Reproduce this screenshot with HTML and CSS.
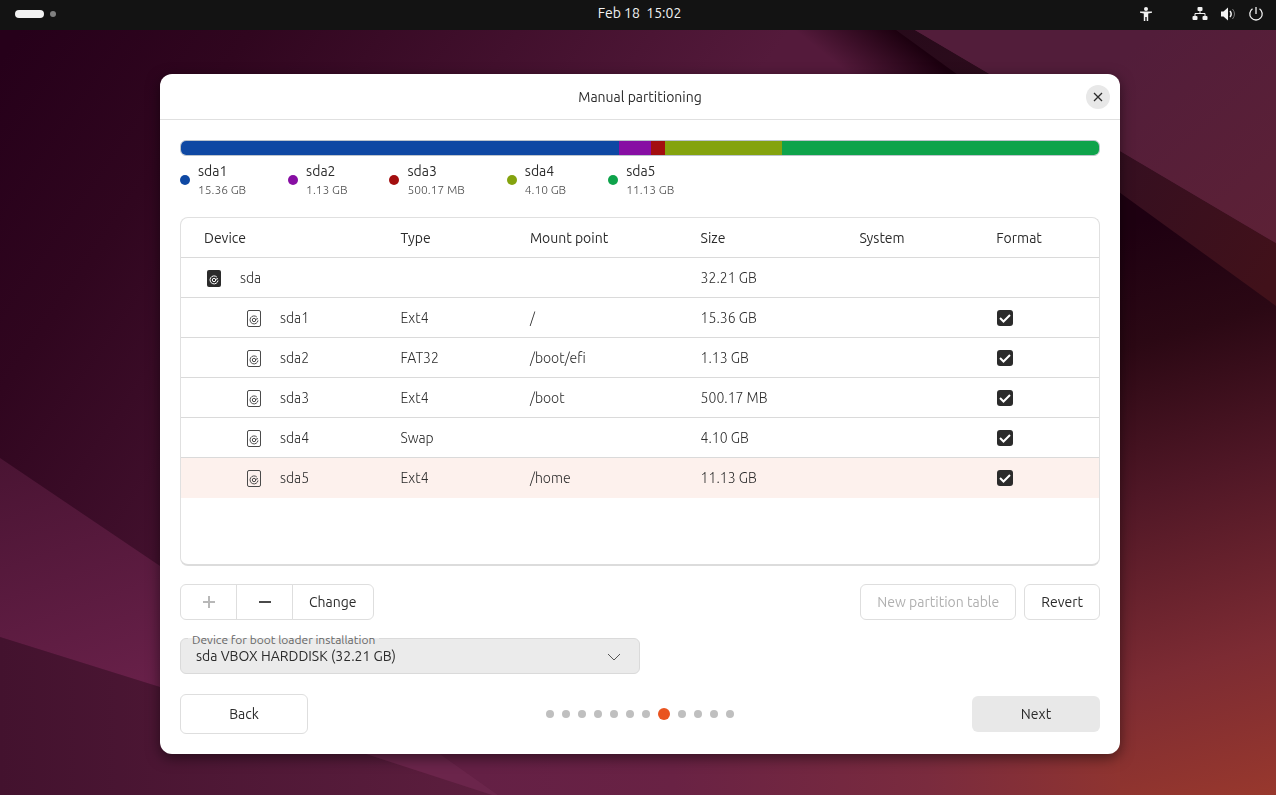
FILE: index.html
```html
<!DOCTYPE html>
<html lang="en">
<head>
  <meta charset="UTF-8" />
  <meta name="viewport" content="width=device-width, initial-scale=1.0" />
  <title>Manual partitioning</title>
  <link rel="stylesheet" href="styles.css">
</head>
<body>
  <!-- wallpaper -->
  <svg class="wallpaper" viewBox="0 0 1276 795" preserveAspectRatio="none" aria-hidden="true">
    <defs>
      <linearGradient id="base" gradientUnits="userSpaceOnUse" x1="0" y1="60" x2="520" y2="420">
        <stop offset="0" stop-color="#26001a" />
        <stop offset="0.3" stop-color="#30061f" />
        <stop offset="1" stop-color="#541a3b" />
      </linearGradient>
      <linearGradient id="ember" gradientUnits="userSpaceOnUse" x1="1110" y1="230" x2="1276" y2="795">
        <stop offset="0" stop-color="#1e0011" />
        <stop offset="0.2" stop-color="#2b0814" />
        <stop offset="0.45" stop-color="#501726" />
        <stop offset="0.75" stop-color="#7c2b33" />
        <stop offset="1" stop-color="#98382d" />
      </linearGradient>
      <linearGradient id="floor" gradientUnits="userSpaceOnUse" x1="480" y1="0" x2="1120" y2="0">
        <stop offset="0" stop-color="#642045" />
        <stop offset="0.3" stop-color="#692244" />
        <stop offset="0.7" stop-color="#7a2b3e" />
        <stop offset="1" stop-color="#8f3430" />
      </linearGradient>
      <linearGradient id="sheet" gradientUnits="userSpaceOnUse" x1="0" y1="460" x2="100" y2="740">
        <stop offset="0" stop-color="#4a1433" />
        <stop offset="1" stop-color="#6c224c" />
      </linearGradient>
      <linearGradient id="corner" gradientUnits="userSpaceOnUse" x1="0" y1="0" x2="480" y2="0">
        <stop offset="0" stop-color="#43122e" />
        <stop offset="1" stop-color="#5c1e3e" />
      </linearGradient>
      <linearGradient id="fold" gradientUnits="userSpaceOnUse" x1="872" y1="92" x2="912" y2="42">
        <stop offset="0" stop-color="#1c000f" stop-opacity="0" />
        <stop offset="1" stop-color="#1c000f" />
      </linearGradient>
      <linearGradient id="band" gradientUnits="userSpaceOnUse" x1="900" y1="30" x2="1276" y2="270">
        <stop offset="0" stop-color="#270a1a" />
        <stop offset="0.6" stop-color="#360f20" />
        <stop offset="1" stop-color="#41111a" />
      </linearGradient>
      <linearGradient id="flap" gradientUnits="userSpaceOnUse" x1="1120" y1="60" x2="1276" y2="240">
        <stop offset="0" stop-color="#521d3a" />
        <stop offset="1" stop-color="#5d2136" />
      </linearGradient>
    </defs>
    <rect width="1276" height="795" fill="url(#base)" />
    <path d="M700 30H900L1276 304V400H700Z" fill="url(#fold)" />
    <path d="M1000 103L1276 304V795H1000Z" fill="url(#ember)" />
    <path d="M400 740H1120V795H400Z" fill="url(#floor)" />
    <path d="M0 637L160 687L440 754L498 795H0Z" fill="url(#corner)" />
    <path d="M0 458L400 728V762L0 637Z" fill="url(#sheet)" />
    <path d="M366 754L340 740H432L440 754L498 795H492Z" fill="#6b254b" />
    <path d="M896 30H915L1276 243V306Z" fill="url(#band)" />
    <path d="M915 30H1276V243Z" fill="url(#flap)" />
  </svg>

  <header class="topbar">
    <div class="workspaces"><span class="pill"></span><span class="dot"></span></div>
    <time class="clock">Feb 18&nbsp; 15:02</time>
    <div class="status">
      <svg class="a11y" width="16" height="16" viewBox="0 0 16 16" fill="#f2f2f2">
        <circle cx="8" cy="3" r="2" />
        <path d="M2 5.500h12v1.300l-3.800.7V15H8.700v-4H7.300v4H5.800V7.500L2 6.800z" />
      </svg>
      <svg width="16" height="16" viewBox="0 0 16 16" fill="#f2f2f2">
        <rect x="5.500" y="1" width="5" height="4" rx="1" />
        <rect x="0.500" y="10" width="5" height="4" rx="1" />
        <rect x="10.500" y="10" width="5" height="4" rx="1" />
        <path d="M8 4v3.500M3 11V7.500h10V11" fill="none" stroke="#f2f2f2" />
      </svg>
      <svg width="16" height="16" viewBox="0 0 16 16" fill="none" stroke="#f2f2f2">
        <path d="M1 5.500h2.500L8 1.500v13L3.500 10.500H1z" fill="#f2f2f2" stroke="none" />
        <path d="M10 5q2.400 3 0 6" stroke-width="1.500" />
        <path d="M12.500 3q4 5 0 10" stroke="#777" />
      </svg>
      <svg width="16" height="16" viewBox="0 0 16 16" fill="none" stroke="#f2f2f2" stroke-width="1.300">
        <path d="M4.500 2.700a6.200 6.200 0 1 0 7 0M8 1v7" />
      </svg>
    </div>
  </header>

  <main class="desktop">
    <section class="window">
      <div class="titlebar">
        <h1>Manual partitioning</h1>
        <button class="close" aria-label="Close">
          <svg width="10" height="10" viewBox="0 0 10 10" stroke="#2b2b2b" stroke-width="1.300"><path d="M1 1l8 8M9 1l-8 8" /></svg>
        </button>
      </div>

      <div class="content">
        <div class="disk-bar">
          <span class="blue" style="flex-grow: 1536"></span>
          <span class="purple" style="flex-grow: 113"></span>
          <span class="red" style="flex-grow: 50"></span>
          <span class="olive" style="flex-grow: 410"></span>
          <span class="green" style="flex-grow: 1113"></span>
        </div>
        <ul class="legend">
          <li><i class="blue"></i><div>sda1<small>15.36 GB</small></div></li>
          <li><i class="purple"></i><div>sda2<small>1.13 GB</small></div></li>
          <li><i class="red"></i><div>sda3<small>500.17 MB</small></div></li>
          <li><i class="olive"></i><div>sda4<small>4.10 GB</small></div></li>
          <li><i class="green"></i><div>sda5<small>11.13 GB</small></div></li>
        </ul>

        <div class="panel">
          <table>
            <colgroup>
              <col class="c-device"><col class="c-type"><col class="c-mount"><col class="c-size"><col class="c-system"><col>
            </colgroup>
            <thead>
              <tr><th>Device</th><th>Type</th><th>Mount point</th><th>Size</th><th>System</th><th>Format</th></tr>
            </thead>
            <tbody>
              <tr>
                <td><div class="device">
                  <svg width="20" height="20" viewBox="0 0 20 20"><rect x="3" y="2" width="14" height="17" rx="2" fill="#2b2b2b" /><g fill="none" stroke="#fff"><path d="M12.800 9a4 4 0 1 0 1.200 3.500" /><circle cx="10" cy="12" r="1.700" /><path d="M11.500 11.500l2.500-1" /></g></svg>
                  sda</div></td>
                <td></td><td></td><td>32.21 GB</td><td></td><td></td>
              </tr>
              <tr>
                <td><div class="device part"><svg width="20" height="20"><use href="#disk" /></svg>sda1</div></td>
                <td>Ext4</td><td>/</td><td>15.36 GB</td><td></td>
                <td><input type="checkbox" aria-label="Format sda1" checked></td>
              </tr>
              <tr>
                <td><div class="device part"><svg width="20" height="20"><use href="#disk" /></svg>sda2</div></td>
                <td>FAT32</td><td>/boot/efi</td><td>1.13 GB</td><td></td>
                <td><input type="checkbox" aria-label="Format sda2" checked></td>
              </tr>
              <tr>
                <td><div class="device part"><svg width="20" height="20"><use href="#disk" /></svg>sda3</div></td>
                <td>Ext4</td><td>/boot</td><td>500.17 MB</td><td></td>
                <td><input type="checkbox" aria-label="Format sda3" checked></td>
              </tr>
              <tr>
                <td><div class="device part"><svg width="20" height="20"><use href="#disk" /></svg>sda4</div></td>
                <td>Swap</td><td></td><td>4.10 GB</td><td></td>
                <td><input type="checkbox" aria-label="Format sda4" checked></td>
              </tr>
              <tr class="selected">
                <td><div class="device part"><svg width="20" height="20"><use href="#disk" /></svg>sda5</div></td>
                <td>Ext4</td><td>/home</td><td>11.13 GB</td><td></td>
                <td><input type="checkbox" aria-label="Format sda5" checked></td>
              </tr>
            </tbody>
          </table>
        </div>

        <div class="actions">
          <div class="group">
            <button class="icon-btn" aria-label="Add" disabled><svg width="12" height="12" viewBox="0 0 12 12"><path d="M6 0v12M0 6h12" /></svg></button>
            <button class="icon-btn" aria-label="Remove"><svg width="12" height="12" viewBox="0 0 12 12"><path d="M0 6h12" /></svg></button>
            <button>Change</button>
          </div>
          <button class="push" disabled>New partition table</button>
          <button>Revert</button>
        </div>

        <div class="boot">
          <label for="boot-device">Device for boot loader installation</label>
          <select id="boot-device">
            <option>sda VBOX HARDDISK (32.21 GB)</option>
          </select>
          <svg class="chevron" width="14" height="8" viewBox="0 0 14 8" fill="none" stroke="#555"><path d="M1 1l6 6 6-6" /></svg>
        </div>

        <div class="nav">
          <button class="back">Back</button>
          <div class="pages">
            <i></i><i></i><i></i><i></i><i></i><i></i><i></i><i class="current"></i><i></i><i></i><i></i><i></i>
          </div>
          <button class="next">Next</button>
        </div>
      </div>
    </section>
  </main>

  <svg class="sprite" width="0" height="0" aria-hidden="true">
    <symbol id="disk" viewBox="0 0 20 20">
      <g fill="none" stroke="#4a4a4a">
        <rect x="3.500" y="2.500" width="13" height="16" rx="1.500" />
        <path d="M12.800 9a4 4 0 1 0 1.200 3.500M11.500 11.500l2.500-1" />
        <circle cx="10" cy="12" r="1.700" />
      </g>
    </symbol>
  </svg>
</body>
</html>
```
FILE: styles.css
```css
* {
  box-sizing: border-box;
}
body {
  margin: 0;
  min-height: 100vh;
  display: flex;
  flex-direction: column;
  font-family: Ubuntu, "Noto Sans", sans-serif;
  font-size: 14px;
  line-height: 20px;
  color: #2b2b2b;
  background: #26001a;
}
.wallpaper {
  position: fixed;
  inset: 0;
  width: 100%;
  height: 100%;
  z-index: -1;
}
.sprite {
  position: absolute;
}

/* top bar */
.topbar {
  display: grid;
  grid-template-columns: 1fr auto 1fr;
  align-items: center;
  height: 30px;
  padding: 0 12px 3px 15px;
  background: #131313;
  color: #f2f2f2;
}
.clock {
  padding-bottom: 2px;
}
.workspaces {
  display: flex;
  align-items: center;
  gap: 6px;
}
.pill {
  width: 29px;
  height: 8px;
  border-radius: 4px;
  background: #f2f2f2;
}
.dot {
  width: 6px;
  height: 6px;
  border-radius: 50%;
  background: #808080;
}
.status {
  display: flex;
  justify-content: flex-end;
  gap: 12px;
}
.a11y {
  margin-right: 26px;
}

/* installer window */
.desktop {
  flex: 1;
  display: flex;
  padding: 44px 156px 41px 160px;
}
.window {
  flex: 1;
  display: flex;
  flex-direction: column;
  background: #fff;
  border-radius: 12px;
  box-shadow: 0 4px 14px rgba(0, 0, 0, 0.5);
}
.titlebar {
  display: grid;
  grid-template-columns: 1fr auto 1fr;
  align-items: center;
  height: 46px;
  padding: 0 10px;
  border-bottom: 1px solid #e0e0e0;
}
h1 {
  grid-column: 2;
  margin: 0;
  font-size: 14px;
  font-weight: 400;
}
button {
  height: 36px;
  padding: 0 16px;
  border: 1px solid #dedede;
  border-radius: 6px;
  background: #fff;
  color: #2b2b2b;
  font: inherit;
}
button:disabled {
  color: #b0b0b0;
}
.close {
  justify-self: end;
  display: grid;
  place-items: center;
  width: 24px;
  height: 24px;
  padding: 0;
  border: none;
  border-radius: 50%;
  background: #e8e8e8;
}
.content {
  flex: 1;
  display: flex;
  flex-direction: column;
  padding: 20px;
}

/* partition colours */
.blue {
  background: #0e48a3;
}
.purple {
  background: #870ea3;
}
.red {
  background: #a30e0f;
}
.olive {
  background: #84a30e;
}
.green {
  background: #0ea34b;
}
.disk-bar {
  display: flex;
  height: 16px;
  border: 1px solid #bcc4cc;
  border-radius: 6px;
  overflow: hidden;
}
.legend {
  display: flex;
  gap: 42px;
  margin: 5px 0 19px;
  padding: 0;
  list-style: none;
}
.legend li {
  display: flex;
  align-items: center;
  gap: 8px;
}
.legend i {
  width: 10px;
  height: 10px;
  margin-top: 1px;
  border-radius: 50%;
}
.legend small {
  display: block;
  font-size: 12px;
  line-height: 17px;
  font-weight: 300;
  color: #4a4a4a;
}

/* partition table */
.panel {
  flex: 1;
  border: 1px solid #e0e0e0;
  border-bottom: 2px solid #dcdcdc;
  border-radius: 8px;
  overflow: hidden;
}
table {
  width: 100%;
  table-layout: fixed;
  border-spacing: 0;
}
.c-device {
  width: 21.4%;
}
.c-type {
  width: 14.1%;
}
.c-mount {
  width: 18.6%;
}
.c-size {
  width: 17.3%;
}
.c-system {
  width: 14.9%;
}
th,
td {
  height: 40px;
  padding: 0 0 0 23px;
  text-align: left;
  border-bottom: 1px solid #dadada;
}
th {
  font-weight: 400;
}
td {
  font-weight: 300;
  color: #2b2b2b;
}
.selected td {
  background: #fdf1ed;
  border-bottom: none;
}
.device {
  display: flex;
  align-items: center;
  gap: 16px;
}
.part {
  padding-left: 40px;
}
input[type="checkbox"] {
  appearance: none;
  display: block;
  width: 16px;
  height: 16px;
  margin: 0 0 0 1px;
  border-radius: 3px;
  background: #2b2b2b url('data:image/svg+xml,<svg xmlns="http://www.w3.org/2000/svg" viewBox="0 0 16 16"><path d="M3 8l3.500 3.500L13 5" fill="none" stroke="white" stroke-width="2"/></svg>');
}

/* buttons under the table */
.actions {
  display: flex;
  gap: 8px;
  margin: 18px 0;
}
.group {
  display: flex;
}
.group button {
  border-radius: 0;
  margin-right: -1px;
}
.group button:first-child {
  border-radius: 6px 0 0 6px;
}
.group button:last-child {
  border-radius: 0 6px 6px 0;
  margin-right: 0;
}
.icon-btn {
  display: grid;
  place-items: center;
  width: 57px;
  stroke: #4a4a4a;
  stroke-width: 2;
}
.icon-btn:disabled {
  stroke: #b8b8b8;
}
.push {
  margin-left: auto;
}
.boot {
  position: relative;
  width: 50%;
}
.boot label {
  position: absolute;
  top: -6px;
  left: 8px;
  padding: 0 4px;
  font-size: 12px;
  line-height: 16px;
  color: #666;
  background: linear-gradient(#fff 6px, #ebebeb 6px);
}
.boot select {
  appearance: none;
  display: block;
  width: 100%;
  height: 36px;
  padding: 0 15px;
  border: 1px solid #dadada;
  border-radius: 6px;
  background: #ebebeb;
  color: #2b2b2b;
  font: inherit;
}
.chevron {
  position: absolute;
  top: 15px;
  right: 19px;
}

/* page navigation */
.nav {
  display: flex;
  align-items: center;
  justify-content: space-between;
  margin-top: 20px;
}
.back,
.next {
  width: 128px;
}
.back {
  height: 40px;
}
.next {
  border: none;
  background: #e8e8e8;
}
.pages {
  display: flex;
  align-items: center;
  gap: 8px;
}
.pages i {
  width: 8px;
  height: 8px;
  border-radius: 50%;
  background: #bfbfbf;
}
.pages .current {
  width: 12px;
  height: 12px;
  background: #e95420;
}
```
